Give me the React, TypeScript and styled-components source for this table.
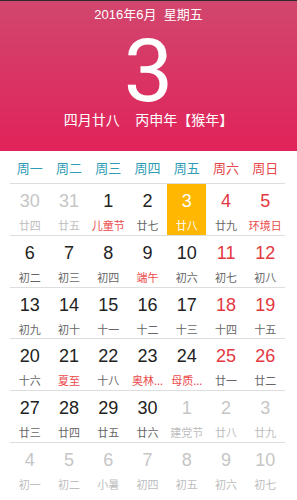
import React from "react";
import styled, { createGlobalStyle } from "styled-components";

const Global = createGlobalStyle`
  html, body { margin: 0; padding: 0; background: #fff; }
  body { width: 297px; font-family: "Liberation Sans", "Noto Sans CJK SC", sans-serif; }
`;

const CJK = `"Liberation Sans", "Noto Sans CJK SC", sans-serif`;

const Header = styled.header`
  height: 150px;
  border-top: 1px solid #2b2b2b;
  background: linear-gradient(180deg, #d1466e 0%, #e1235a 100%);
  color: #fff;
  display: flex;
  flex-direction: column;
  align-items: center;
  font-family: ${CJK};
`;

const DateLine = styled.div`
  margin-top: 6px;
  font-size: 13px;
  line-height: 16px;
  white-space: pre;
`;

const BigDay = styled.div`
  margin-top: 14px;
  font-family: Roboto, "Liberation Sans", sans-serif;
  font-weight: 400;
  font-size: 88px;
  line-height: 68px;
  height: 68px;
`;

const LunarLine = styled.div`
  margin-top: 6px;
  font-size: 14px;
  line-height: 18px;
  white-space: pre;
`;

const Grid = styled.div`
  padding: 0 12px 0 10px;
`;

const WeekRow = styled.div`
  display: grid;
  grid-template-columns: repeat(7, 1fr);
  height: 32px;
  border-bottom: 1px solid #dedede;
  align-items: center;
`;

const WeekLabel = styled.div<{ $weekend?: boolean }>`
  text-align: center;
  font-family: "Noto Sans CJK SC", sans-serif;
  font-size: 13px;
  color: ${(p) => (p.$weekend ? "#e5474a" : "#2e9bb4")};
`;

const Row = styled.div<{ $last?: boolean }>`
  display: grid;
  grid-template-columns: repeat(7, 1fr);
  height: 50.8px;
  border-bottom: ${(p) => (p.$last ? "none" : "1px solid #dedede")};
`;

type Kind = "normal" | "weekend" | "other" | "today";

const Cell = styled.div<{ $kind: Kind }>`
  display: flex;
  flex-direction: column;
  align-items: center;
  padding-top: 6px;
  background: ${(p) => (p.$kind === "today" ? "#ffb701" : "transparent")};
`;

const Num = styled.div<{ $kind: Kind }>`
  font-family: "Liberation Sans", sans-serif;
  font-size: 18px;
  line-height: 22px;
  color: ${(p) =>
    p.$kind === "today"
      ? "#fff"
      : p.$kind === "other"
      ? "#c6c6c6"
      : p.$kind === "weekend"
      ? "#e3383f"
      : "#222"};
`;

const Lunar = styled.div<{ $kind: Kind; $fest?: boolean }>`
  margin-top: 6px;
  font-family: "Noto Sans CJK SC", sans-serif;
  font-size: 11px;
  line-height: 14px;
  white-space: nowrap;
  color: ${(p) =>
    p.$kind === "today"
      ? "#fff"
      : p.$kind === "other"
      ? "#bdbdbd"
      : p.$fest
      ? "#ec4a4a"
      : "#666"};
`;

type D = [string, string, Kind, boolean?];

const rows: D[][] = [
  [
    ["30", "廿四", "other"],
    ["31", "廿五", "other"],
    ["1", "儿童节", "normal", true],
    ["2", "廿七", "normal"],
    ["3", "廿八", "today"],
    ["4", "廿九", "weekend"],
    ["5", "环境日", "weekend", true],
  ],
  [
    ["6", "初二", "normal"],
    ["7", "初三", "normal"],
    ["8", "初四", "normal"],
    ["9", "端午", "normal", true],
    ["10", "初六", "normal"],
    ["11", "初七", "weekend"],
    ["12", "初八", "weekend"],
  ],
  [
    ["13", "初九", "normal"],
    ["14", "初十", "normal"],
    ["15", "十一", "normal"],
    ["16", "十二", "normal"],
    ["17", "十三", "normal"],
    ["18", "十四", "weekend"],
    ["19", "十五", "weekend"],
  ],
  [
    ["20", "十六", "normal"],
    ["21", "夏至", "normal", true],
    ["22", "十八", "normal"],
    ["23", "奥林...", "normal", true],
    ["24", "母质...", "normal", true],
    ["25", "廿一", "weekend"],
    ["26", "廿二", "weekend"],
  ],
  [
    ["27", "廿三", "normal"],
    ["28", "廿四", "normal"],
    ["29", "廿五", "normal"],
    ["30", "廿六", "normal"],
    ["1", "建党节", "other"],
    ["2", "廿八", "other"],
    ["3", "廿九", "other"],
  ],
  [
    ["4", "初一", "other"],
    ["5", "初二", "other"],
    ["6", "小暑", "other"],
    ["7", "初四", "other"],
    ["8", "初五", "other"],
    ["9", "初六", "other"],
    ["10", "初七", "other"],
  ],
];

const weeks = ["周一", "周二", "周三", "周四", "周五", "周六", "周日"];

export default function App() {
  return (
    <>
      <Global />
      <Header>
        <DateLine>{"2016年6月  星期五"}</DateLine>
        <BigDay>3</BigDay>
        <LunarLine>{"四月廿八    丙申年【猴年】"}</LunarLine>
      </Header>
      <Grid>
        <WeekRow>
          {weeks.map((w, i) => (
            <WeekLabel key={w} $weekend={i >= 5}>
              {w}
            </WeekLabel>
          ))}
        </WeekRow>
        {rows.map((r, ri) => (
          <Row key={ri} $last={ri === rows.length - 1}>
            {r.map(([n, l, k, f], ci) => (
              <Cell key={ci} $kind={k}>
                <Num $kind={k}>{n}</Num>
                <Lunar $kind={k} $fest={f}>
                  {l}
                </Lunar>
              </Cell>
            ))}
          </Row>
        ))}
      </Grid>
    </>
  );
}
